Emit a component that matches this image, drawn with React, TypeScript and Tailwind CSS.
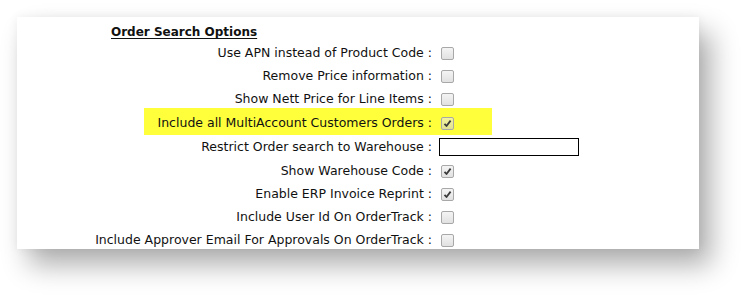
import React from "react";

type Row = { label: string; kind: "check" | "text"; checked?: boolean; highlight?: boolean; h: string };

const rows: Row[] = [
  { label: "Use APN instead of Product Code :", kind: "check", h: "h-[23px]" },
  { label: "Remove Price information :", kind: "check", h: "h-[23px]" },
  { label: "Show Nett Price for Line Items :", kind: "check", h: "h-[23px]" },
  { label: "Include all MultiAccount Customers Orders :", kind: "check", checked: true, highlight: true, h: "h-[24px]" },
  { label: "Restrict Order search to Warehouse :", kind: "text", h: "h-[24px]" },
  { label: "Show Warehouse Code :", kind: "check", checked: true, h: "h-[24px]" },
  { label: "Enable ERP Invoice Reprint :", kind: "check", checked: true, h: "h-[23px]" },
  { label: "Include User Id On OrderTrack :", kind: "check", h: "h-[23px]" },
  { label: "Include Approver Email For Approvals On OrderTrack :", kind: "check", h: "h-[23px]" },
];

function Checkbox({ checked }: { checked?: boolean }) {
  return (
    <span className="ml-[9px] flex h-[13px] w-[13px] items-center justify-center rounded-[2px] border border-[#a8a8a8] bg-gradient-to-b from-[rgba(235,235,235,0.55)] to-[rgba(205,205,205,0.6)]">
      {checked && (
        <svg width="9" height="9" viewBox="0 0 9 9">
          <path d="M1.5 4.8 L3.5 7 L7.6 1.6" fill="none" stroke="#3a3a3a" strokeWidth="1.8" strokeLinejoin="round" />
        </svg>
      )}
    </span>
  );
}

export default function App() {
  return (
    <div className="h-[298px] w-[747px] bg-white pl-[17px] pt-[17px] font-['DejaVu_Sans',sans-serif] text-[12.5px] text-[#111]">
      <div className="h-[232px] w-[682px] overflow-hidden bg-white pt-[5px] shadow-[0_0_10px_rgba(0,0,0,0.06),12px_16px_26px_rgba(0,0,0,0.32)]">
        {/* heading */}
        <div className="h-[20px] pl-[94px] text-[12px] font-bold leading-[20px] underline underline-offset-2">
          Order Search Options
        </div>

        {rows.map((r) => (
          <div key={r.label} className={`relative flex items-center ${r.h}`}>
            {r.highlight && <span className="absolute left-[127px] top-[-3px] h-[27px] w-[348px] bg-[#ffff3c]" />}
            <span className="relative w-[415px] whitespace-nowrap text-right">{r.label}</span>
            {r.kind === "check" ? (
              <span className="relative">
                <Checkbox checked={r.checked} />
              </span>
            ) : (
              <span className="ml-[7px] h-[18px] w-[140px] border border-black bg-white" />
            )}
          </div>
        ))}
      </div>
    </div>
  );
}
